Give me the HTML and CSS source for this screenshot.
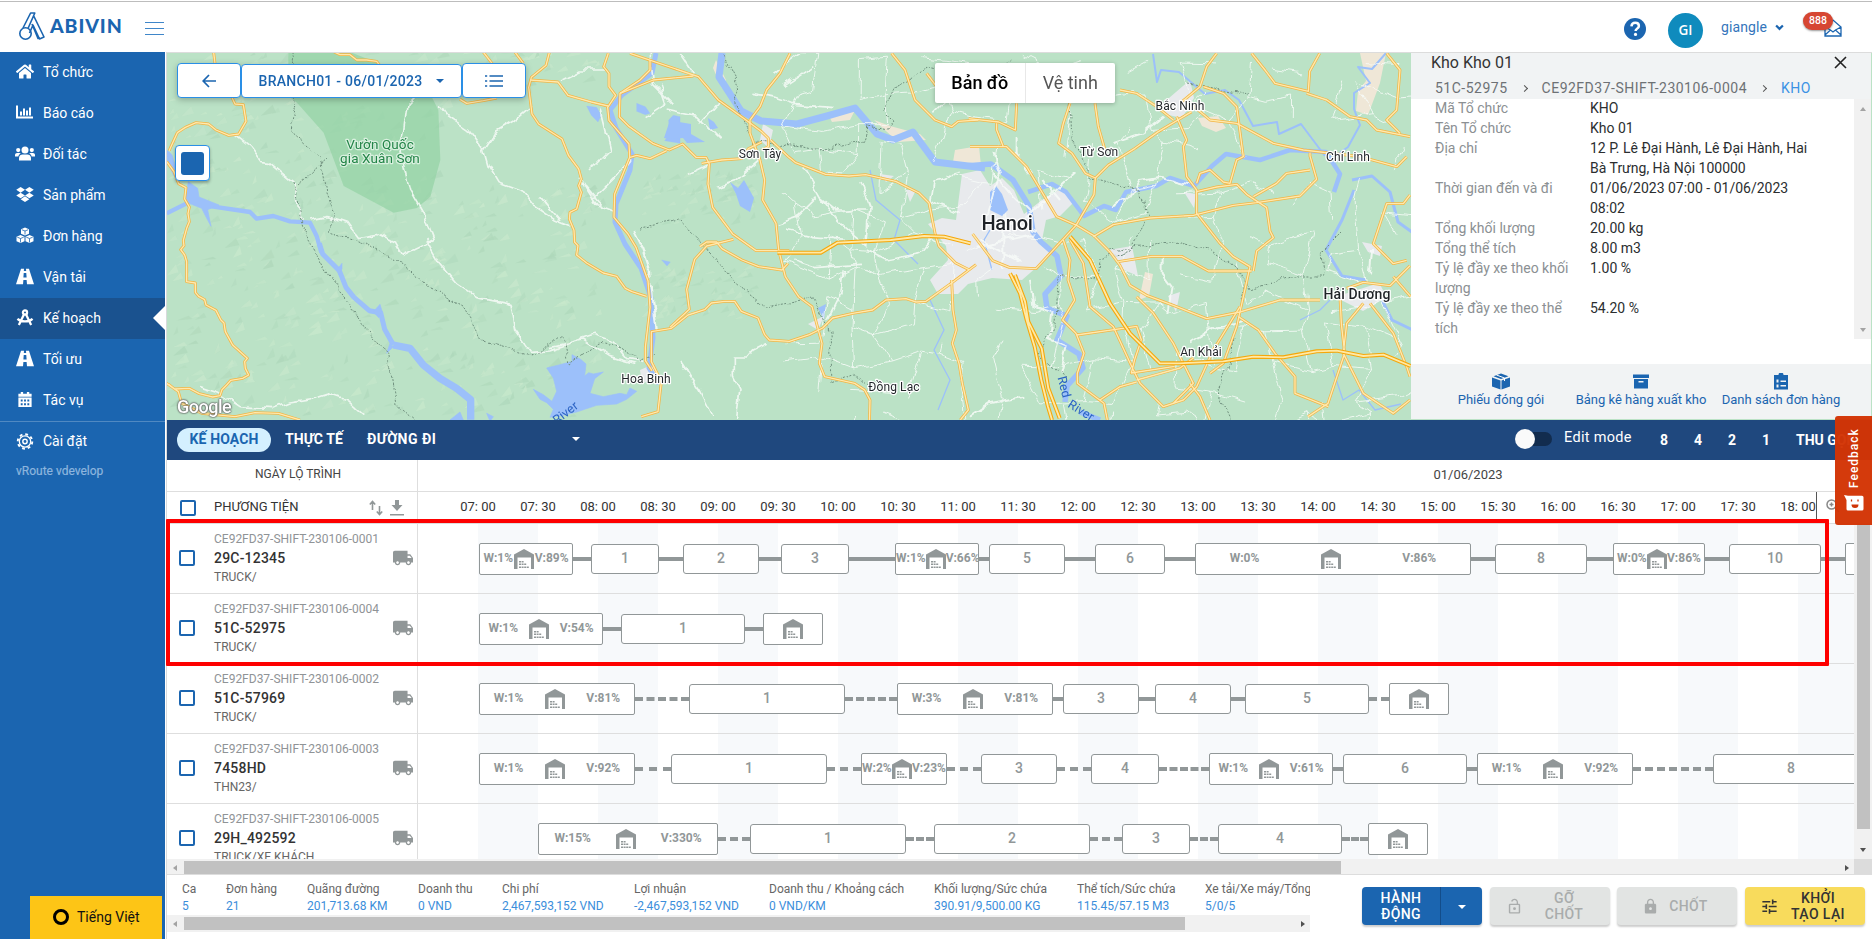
FILE: index.html
```html
<!DOCTYPE html>
<html lang="vi">
<head>
<meta charset="utf-8">
<title>Abivin vRoute</title>
<link rel="stylesheet" href="styles.css">
</head>
<body>
<svg class="sprite" width="0" height="0">
  <symbol id="i-truck" viewBox="1 4 22 16"><path d="M20 8h-3V4H3c-1.100 0-2 .9-2 2v11h2c0 1.660 1.340 3 3 3s3-1.340 3-3h6c0 1.660 1.340 3 3 3s3-1.340 3-3h2v-5l-3-4zM6 18.500c-.83 0-1.500-.67-1.500-1.500s.67-1.500 1.500-1.500 1.500.67 1.500 1.500-.67 1.500-1.500 1.500zm13.500-9l1.960 2.500H17V9.500h2.500zm-1.500 9c-.83 0-1.500-.67-1.500-1.500s.67-1.500 1.500-1.500 1.500.67 1.500 1.500-.67 1.500-1.500 1.500z"/></symbol>
  <symbol id="i-depot" viewBox="0 0 20 20"><path d="M0 20V5.500L10 0l10 5.500V20h-3V8.500H3.500V20z"/><path d="M5 12h2v1.500H5zM7.600 12h2v1.500h-2zM5 14.500h2V16H5zM7.600 14.500h2V16h-2zM10.200 14.500h2V16h-2zM5 17.500h2V19H5zM7.600 17.500h2V19h-2zM10.200 17.500h2V19h-2zM12.800 17.500h2V19h-2z"/></symbol>
  <symbol id="i-road" viewBox="0 0 20 17"><path d="M5.600 0h3.300l-.2 2.500h2.600L11.100 0h3.300L20 17h-7.800l-.4-4.500H8.200L7.800 17H0zM8.600 4.500l-.4 5h3.600l-.4-5z" fill-rule="evenodd"/></symbol>
</svg>

<header class="topbar">
  <svg class="logo-mark" viewBox="0 0 26 30" fill="none" stroke="#1b65b0" stroke-width="1.600" stroke-linejoin="round"><circle cx="6.500" cy="22.500" r="5.700"/><path d="M4 17L11.600 2h4.200L9 17.500M14.500 4.500L25 26l-4.500 2-6.500-14-3.500 8M13 13l6 14.500 2-.5"/></svg>
  <span class="logo-text">ABIVIN</span>
  <span class="burger"><i></i><i></i><i></i></span>
  <div class="account">
    <svg class="help" viewBox="0 0 22 22"><circle cx="11" cy="11" r="11" fill="#1b65b0"/><path d="M7.400 8.300c.3-2.300 1.800-3.500 3.800-3.500 2.100 0 3.700 1.200 3.700 3.100 0 2.700-3.300 2.700-3.300 5" fill="none" stroke="#fff" stroke-width="2.500"/><circle cx="11.500" cy="16.400" r="1.600" fill="#fff"/></svg>
    <span class="avatar">GI</span>
    <span class="user">giangle</span>
    <svg class="chev" viewBox="0 0 8 6"><path d="M1 1.200l3 3 3-3" fill="none" stroke="#1b65b0" stroke-width="2"/></svg>
    <span class="mail"><svg viewBox="0 0 18 18" fill="none" stroke="#1b65b0" stroke-width="1.300"><path d="M1 8v9h16V8L9 1zM1 16l5.500-5 2.500 2 2.500-2 5.500 5M1 8l5.500 3M17 8l-5.500 3"/></svg><b>888</b></span>
  </div>
</header>

<div class="body">
  <nav class="side">
    <a><svg viewBox="0 0 576 512"><path d="M280.370 148.260L96 300.110V464a16 16 0 0 0 16 16l112.060-.29a16 16 0 0 0 15.920-16V368a16 16 0 0 1 16-16h64a16 16 0 0 1 16 16v95.640a16 16 0 0 0 16 16.050L464 480a16 16 0 0 0 16-16V300L295.670 148.260a12.190 12.190 0 0 0-15.300 0zM571.600 251.470L488 182.560V44.050a12 12 0 0 0-12-12h-56a12 12 0 0 0-12 12v72.610L318.470 43a48 48 0 0 0-61 0L4.340 251.470a12 12 0 0 0-1.600 16.900l25.500 31A12 12 0 0 0 45.150 301l235.220-193.740a12.190 12.190 0 0 1 15.300 0L530.900 301a12 12 0 0 0 16.900-1.600l25.500-31a12 12 0 0 0-1.700-16.930z"/></svg>Tổ chức</a>
    <a><svg viewBox="0 0 18 16"><path d="M0 1h2v11h15v2H0zM4 7h2v4H4zM7 4h2v7H7zM10 6h2v5h-2zM13 3h2v8h-2z"/></svg>Báo cáo</a>
    <a><svg class="wide" viewBox="0 0 20 16"><circle cx="10" cy="4.500" r="3.500"/><circle cx="3.200" cy="4.600" r="2.100"/><circle cx="16.800" cy="4.600" r="2.100"/><path d="M4 15v-2.500C4 10 6 9 7.500 9h5c1.500 0 3.500 1 3.500 3.500V15zM0 11V9.500C0 8.300 1 7.500 2 7.500h2.500c.6 0 1.100.2 1.400.5C4.200 8.700 3.500 10 3.300 11zM20 11V9.500c0-1.200-1-2-2-2h-2.500c-.6 0-1.100.2-1.400.5 1.700.7 2.400 2 2.600 3z"/></svg>Đối tác</a>
    <a><svg viewBox="0 0 528 512"><path d="M264.400 116.300l-132 84.300 132 84.300-132 84.300L0 284.100l132.300-84.300L0 116.300 132.300 32l132.100 84.300zM131.600 395.700l132-84.300 132 84.300-132 84.300-132-84.300zm132.800-111.600l132-84.300-132-83.600L395.700 32 528 116.300l-132.300 84.300L528 284.800l-132.300 84.300-131.300-85z"/></svg>Sản phẩm</a>
    <a><svg viewBox="0 0 18 16"><path d="M9 0l4 1.700v4.500L9 8 5 6.200V1.700zM4.500 7.500l4 1.700v4.500l-4 1.800-4-1.800V9.200zM13.500 7.500l4 1.700v4.500l-4 1.800-4-1.800V9.200z"/><path d="M5.800 2.200L9 3.500l3.200-1.300M1.300 9.700L4.500 11l3.200-1.300M10.300 9.700l3.200 1.300 3.200-1.300M9 3.500V7M4.500 11v4M13.500 11v4" fill="none" stroke="#1b65b0" stroke-width=".8"/></svg>Đơn hàng</a>
    <a><svg><use href="#i-road"/></svg>Vận tải</a>
    <a class="on"><svg viewBox="0 0 18 18" fill="none" stroke="#fff" stroke-width="2.400"><circle cx="9" cy="3.600" r="2.200"/><path d="M8 5.500L2.500 17M10 5.500L15.500 17M1 10.500c4 3.600 12 3.600 16 0"/></svg>Kế hoạch</a>
    <a><svg><use href="#i-road"/></svg>Tối ưu</a>
    <a><svg viewBox="0 0 18 18"><path fill-rule="evenodd" d="M2 3h2.500V1H7v2h4V1h2.500v2H16v3H2zM2 7h14v10H2zM4.500 9v2h2V9zM8 9v2h2V9zM11.500 9v2h2V9zM4.500 13v2h2v-2zM8 13v2h2v-2zM11.500 13v2h2v-2z"/></svg>Tác vụ</a>
    <a class="sep"><svg viewBox="0 0 18 18" fill="none" stroke="#fff"><circle cx="9" cy="9" r="7.700" stroke-width="2" stroke-dasharray="3 3.050"/><circle cx="9" cy="9" r="6" stroke-width="1.400"/><circle cx="9" cy="9" r="2.300" stroke-width="1.500"/></svg>Cài đặt</a>
    <span class="ver">vRoute vdevelop</span>
    <div class="lang"><i></i>Tiếng Việt</div>
  </nav>

  <main class="main">
    <section class="map">
      <svg class="canvas" viewBox="167 53 1244 367" preserveAspectRatio="none">
        <defs>
          <filter id="wiggle" filterUnits="userSpaceOnUse" x="160" y="45" width="1260" height="385"><feTurbulence type="fractalNoise" baseFrequency=".07" numOctaves="2" seed="4"/><feDisplacementMap in="SourceGraphic" scale="9" xChannelSelector="R" yChannelSelector="G"/></filter>
          <g id="major">
            <g transform="translate(160 50) scale(.33333)">
              <path d="M160 0L165 40M215 140l10 22 25 2 8 50-22 38-30 4-38-16-22-18-38-4-32 14-24 16-22 48-2 6M20 335l22 30 14 36 22 12-4 34 14 24-4 20 4 24-8 20-10 36 2 16-10 12 12 16 6 20v60l26 4v28l10 12 18 10 4 16 30 16 14 28 10 10 4 26 22 40 44 40-8 10 2 20 10 20-18 10-36 6-12 14-14 14-6 18-22 4-40-10-30-16-44 2-18-14-30-8M20 1000l35 25 10 35 60 30 100 10 60-12 70 2 65 20M510 0l30 14h30l20 16h30l30 4 20 26M965 0l35 45M1060 0l30 40M900 148l20 12 50-8 40-8"/>
              <path d="M1170 0l-12 46-44 36-8 30 10 80 20 30 70 45 20 50 30 40 8 30-8 20 8 20-14 50-20 10-2 20 14 34 2 36 10 10-4 28 30 24 50 30 40 10 26 36 20 10 44 14"/>
              <path d="M1110 90l84 6 30 40 70 20 50 12"/>
            </g>
            <g transform="translate(540 40) scale(.33333)">
              <path d="M270 40l190 65 15 5 60 70 90 65 40 30 20 20v25l-20 10M692 300l53 50 22 18 90 35 70 5 50-4 90 20 70 35 30 30 20 100 10 30 50 50 40 20"/>
              <path d="M205 40l-14 40 16 20v40l20 26-24 36 4 40 60 70 2 40-45 110-2 70 42 50 24 40 36 100 6 80-7 60-7 60 0 40 20 30"/>
              <path d="M330 60v30l-30 30-60 40-2 70 30 30 70 50 50 20 40-18 40 40h30l10 20-4 60 14 70 60 80 70 50h100"/>
              <path d="M240 160l100-40 120-12M270 352l20-6 40 10 50-24M485 370l60-10 60-4 20-30 40-20"/>
              <path d="M750 40l-30 60-40 50-20 50-30 40v40l30 80 14 60-6 60 40 70 8 80 20 80 40 60 40 30 30 110-8 60 16 40 90 20 30 20 16 30-2 80-14 20"/>
              <path d="M304 1130l50-15 10-90-30-60v-90l60-10 50-40 50-16 20-20 40-5h30l20 30 50 20 20 50 14 16 60 4 60-20 40-20 30-30 60-14 60-10 40-30 60-4 30 10 30-2 70-50 80-60"/>
              <path d="M390 862l58-54-8-60 24-90 36-40 80-20M480 620l20-14h30l16 20 60 34 50 20 70 10 18-20"/>
              <path d="M1160 100l60 80h60M1055 40l40 50 30 90 60 60 50 20 20-16 60-4"/>
              <path d="M1235 720l4 90 10 60-12 40 20 60 10 60 18 80-24 30"/>
            </g>
            <g transform="translate(970 40) scale(.33333)">
              <path d="M0 320h110l60 60 60 100 30 50 60 26 50 30 50 50 30 40 30 60 50 30 80 30 100 40 100-20 120-36h120"/>
              <path d="M300 190l-20 60-14 60 40 30 40 60 30 14-4 50-54 92-120 130-80-4-50-20-60-80M375 415l40-40 80-50 70-50 100-60M450 150l50 10 60 40 50 40M620 230l30 70-10 20 10 90 30 40v70l70 90 40 40 50 30-20 90-20 90-40 110-40 30M740 40l-30 40-20 60-60 50"/>
              <path d="M370 590l60-36 110-20 130-8 120-30 70-8 130-20 50-50-20-70 0-10"/>
              <path d="M660 190l60 50 80 10 110 60 90 20 170 20 110 30 30-30M700 140l60 20 40 40 20 150-20 10-20 70-20-4-40-36-30 10-10 30M680 455l60-14 60-8 30 30 60 40 10 70 10 20-50 40-10 60M850 470l70-40 30-30 70-10"/>
              <path d="M845 40l40 50 30 40 100 24 4-60 30-54M1010 160l60 20 70 50 50 10 30 30 100 20M1250 40l40 50-10 120-30 30 40 40"/>
              <path d="M445 665l100-16h90l80 44h130M80 250v20l20 50M140 190l-4 80-50-24-90-10M375 190l10 70 20 70"/>
              <path d="M280 600l20 60-6 60 20 60-36 60 40 40 24 60-20 60v30l80 60 10 50M300 600l40 70 20 130 70 60 60 130 20 40 70 70 60-20 40-40 50-110 80-130M320 885l180-26 14 40-20 60-10 40 130-20M500 770l50 50 60 90 60 120-60 60M500 1020l130-36 40-30M390 1080l60-40 50-14M660 1030l30 40 30 70"/>
              <path d="M805 830l60 40 50 70 60 70v50l100 40M1110 770l4 80 10 90-50 150-60 40M1180 790l-50 60-10 90 60 120 90 60 50-40M1200 790l70 90 40 100 10 30M1320 465l-20 26h-50l-40 120 60 60 40-10M1130 745l50-18 80 10 60-60M1270 710l52 60"/>
            </g>
          </g>
          <g id="trunk">
            <g transform="translate(540 40) scale(.33333)"><path d="M712 638h130l50-30 160-8 100-12 60 2 80 20"/></g>
            <g transform="translate(970 40) scale(.33333)">
              <path d="M300 590l60 70 60 130 60 90 60 60 30 30h60l130-6 90-14 90 2 100-18 60-2 80 16 60-4 82 34M135 705l30 80 10 60 40 80 20 120 34 90M120 700l30 60 20 80 24 80 20 100 20 80 12 40"/>
            </g>
          </g>
        </defs>
        <rect x="167" y="53" width="1244" height="367" fill="#bbe2c6"/>
        <g id="relief"></g>
        <g transform="translate(160 50) scale(.33333)">
          <path d="M385 0h170l100 40 60 40 100 60 20 40 6 150-30 110-40 34-70 14-150-80-60-160-80-90-26-20z" fill="#94d3a5" opacity=".72"/>
        </g>
        <g transform="translate(160 50) scale(.33333)" fill="#9cc0fa" stroke="#9cc0fa" stroke-linejoin="round">
          <path fill="none" stroke-width="13" d="M20 490l60-30 10-30M130 460l30 10 110 16 20 20 50-8 50 16 60 4 20 40 14 50"/>
          <path fill="none" stroke-width="15" d="M478 580l10 32 50 50 20 50 24 30 46 40 34 6 12 50 26 46"/>
          <path fill="none" stroke-width="22" d="M700 885l50 10 40 50 50 40 50 30 42 34v60"/>
          <path stroke-width="2" d="M85 395l28 20 4 26 60 24-34 14 10 50-16-30-12-24-50-20zM530 660l16-20v16l-8 20zM640 785l20-22 6 20-10 20zM690 880l-10 30 20-20zM20 300l16 14 16 60-10 4-20-40zM870 1110l30-24 10 24zM980 1090l20 10-10 14z"/>
          <path stroke-width="2" d="M1200 944l36-10 0-20 26 14 16 14-4 36 12-10 14 4 30-6-26 20-14 44 40 10 50-10 20 4 10-20 20 10-30 24-30 14-60 4-60 20-40 10-40 6 10-24-20-20-20-10-20-30 30 16 26 20 14-30-10-40-20-30z"/>
          <path d="M1526 210l14-14 20 4v80l-46-8 14-20zM1430 160l26 10 14 20-14 4-26-10zM1280 168l30 4 14 24-10 20-20-20zM1505 630l26 6-10 12z"/>
        </g>
        <g fill="#efe7d7">
          <path d="M716 60l10 20-4 8-9-20zM830 118l26-10-6 12-18 2zM874 120l24 22 28-2-6-6-30-8zM955 150l24-4 2 20-28-4zM1198 118l20-2 8 12-10 4-14-6zM1145 272l8 2-4 22-10 4zM1360 53h26l-6 30-6 16-6 16-12-4 2-20 8-10z"/>
        </g>
        <path d="M962 174l18-4 10 16 12-8 12 12 10 24 18-14 20-12 12 14-14 14-14 4-4 20 10 12-14 14-16 14-30-2-24 6-10 10h-20l-8-14 18-20-2-14-18-22 14-6 14 2z" fill="#e8eaed"/>
        <path d="M1162 104l28-24 4 18-12 20-18-4zM763 124l10 6-4 18-9-8zM808 324l16-8-6 14zM1335 297l44-14 8 14-24 14zM1108 250l24-4 6 30-14-6zM1168 296l12-4-4 20zM640 370l14-6 4 12-16 8zM1184 192l12 2-2 14zM1362 242l20 4-2 10-12-4zM880 174l14 2-8 6zM906 190h10l-6 12z" fill="#e8eaed"/>
        <g class="water" fill="none" stroke="#9cc0fa" stroke-linejoin="round">
          <path d="M656 53l-4 20-30 22-12 15 6 18 16 26-2 16-14 34-1 18 10 22 16 24 10 30 2 40-4 30 10 16" stroke-width="5"/>
          <path d="M722 53l-3 24 22 34 20 10 36 3 30-8 28-8 22 26 16 6 20-8 22 30 50 6" stroke-width="7"/>
          <path d="M965 166l26-2 22 16 16 26 4 26 8 10 16 14 4 20-16 18 2 14 20 8-10 24 22 14 4 14-16 18-2 16M1080 412l20 8" stroke-width="5.500"/>
          <path d="M1028 192l24-8 14 8 18 24 20-10 12 4 10-18 30-6 14-8 24 8 18-20 14-12 34 6 30-10 36 2 14 22-6 18" stroke-width="4.500"/>
          <path d="M1153 54l4 28 4-12 18 2 26 22 20-4 14 10 14 26 24-4 2 12 22-10 24 32" stroke-width="2"/>
          <path d="M1354 190l-12 30-16 30 16 26 24 4M1352 180l20-4 18 16 8 30 14 10M1382 300l10 20 21 10" stroke-width="3"/>
          <path d="M1386 53l-14 16-14-2 12 16-16 10v16l6 16-12 22-14 10" stroke-width="2"/>
          <path d="M990 230l-6 10 8 30M930 300l14 30-10 20 16 30-12 30M870 170l6 30 24 20-6 20 24 24M1333 370l10 30 16-10 16 20 26-6M1300 320l20-10 20-20" stroke-width="1.300"/>
        </g>
        <path d="M664 138l6-18 5-4 4 6 12 2v10l14 8-18 1-4-5-12 1zM730 182l8 6 6-8 10 18-4 14-10-6-4-12zM990 192l6-6 6 8 6 16-6 6-12-6zM637 104l10 6-4 4zM708 118l6 4 4 6-8 2zM818 308l8-4-2 16z" fill="#9cc0fa"/>
        <g class="minor" fill="none" stroke="#f7fbf8" stroke-linejoin="round" filter="url(#wiggle)">
          <g id="lanes" stroke-width="1"></g>
          <g transform="translate(160 50) scale(.33333)" stroke-width="5">
            <path d="M230 260l40 30 36 48 22 2 74 62 6 60 22 50M450 510l50-10 60 20 30 40 60-10 60 30 20 36 70-34 20-10-30-80-40-70-30-120 14-60 10-80 40-40 30-8 20-20M840 160l26 38 60 40 44 60 14 50 30 50 80 30 30 40 60 40 50 20M800 570l40 70 50 60 60 40 100 20 14 80 46 64 60-4 70-24 60-20 60 20 40 50 50 8M970 300l40-60 50-30 54-44M120 1010l60 20 60 40 100 6 50-20 60-10 50-16 60 20 50 44M1260 380l50 80 50 20M1290 360l60-60-30-120M1410 330l-40 50-70 70M1540 160l-60-60-10-100"/>
          </g>
          <g transform="translate(540 40) scale(.33333)" stroke-width="5">
            <path d="M540 180l-60 70M420 40l40 60M530 440l60-20 70-60M790 380l50 90 50 40h90M840 470l60 80 80 70 10-120-30-80M1260 400l-80 20-10 60 90 40M680 910l-40 20-20 24h-40v60l20 40-10 80M710 550l60-20 60-60M980 630l60 30 100-20 40-50"/>
            <path d="M640 160l60 10 60 20 120 10M700 100l80-60M820 80l-90 60M380 210l90 20 70 70M450 400l60-30M360 130l20 60-60 40M740 570l80 20 120 10M760 660l60 20 140-10M910 690l-10 70-40 80M30 920l100-20 80 50 70 20M60 120l60-30h80M140 440l50 60M420 960l60 90 40 80M60 540l-60-70M1180 220l60-60"/>
            <path d="M280 570l30 60 20 60 10 100 10 80" stroke-width="7"/>
          </g>
          <g transform="translate(970 40) scale(.33333)" stroke-width="6">
            <path d="M140 290v50l40 60M310 400l-140 130M520 280l60-50M430 310l90-30M50 530l40-130-20-60M70 400l50 60 60 60M180 720l10 80 60 20-10 80 50 20-20 80M575 650v50l30 40-10 80M660 910l80-50 80-20M0 1130l60-40 100-20M420 500l60-30 30-50 60-10 100 26M1200 700l6-70M100 540l100 30M20 620l180-40M30 600l120 60M100 520v170M220 420l50 60"/>
          </g>
        </g>
        <path class="border" filter="url(#wiggle)" d="M1012 60l-30 20 4 16-22 0-14-26-22-4-14 12-20 10-10 24 10 10-6 8-20-4-4 14-44 10-16-4-50-4-16-30-4-36-10-20M293 53l2 50-4 28 30 26 6 36 8 20-6 20 30 8 40 20 24 22 40 24 20 34 50 14 30-20 6 28 30-20 20 4 20 14 16-8M298 185l30-26M293 184l12 48 22 40 42 60 20 24 8 50 18 14-14 30M640 228l40-8 24 26 30 36 30 24 50-8 16 34 2 50 20-8 30 20M1070 100l2 40 20 38 46 12 10 26-12 24-6 10-30 10-2 20-40-4-2 50-20 30 30 20M1110 250l60-8 40 8 30 20 10 20 40-14 34 0-2-24 20-20M1244 284l-14 76-12 30 20 44M1189 84l60 10"/>
        <use href="#major" class="casing"/><use href="#major" class="core"/>
        <use href="#trunk" class="casing wide"/><use href="#trunk" class="core wide"/>
        <g class="labels" text-anchor="middle">
          <text x="380" y="149" class="park">Vườn Quốc</text><text x="380" y="163" class="park">gia Xuân Sơn</text>
          <text x="760" y="158">Sơn Tây</text><text x="646" y="383">Hoa Binh</text><text x="894" y="391">Đồng Lạc</text>
          <text x="1180" y="110">Bắc Ninh</text><text x="1099" y="156">Từ Sơn</text><text x="1348" y="161">Chí Linh</text>
          <text x="1201" y="356">An Khải</text><text x="1357" y="299" class="town">Hải Dương</text><text x="1007" y="230" class="city">Hanoi</text>
          <text class="river" transform="translate(568 416) rotate(-38)">River</text>
          <text class="river" transform="translate(1060 388) rotate(76)">Red</text>
          <text class="river" transform="translate(1079 414) rotate(32)">River</text>
        </g>
      </svg>
      <div class="route-bar">
        <button><svg width="15" height="14" viewBox="0 0 15 14"><path d="M14 7H1.500M7 1L1.200 7 7 13" fill="none" stroke="#1b65b0" stroke-width="1.700"/></svg></button>
        <button class="pick">BRANCH01 - 06/01/2023<i class="caret"></i></button>
        <button><svg width="18" height="14" viewBox="0 0 18 14"><path d="M4.500 2H18M4.500 7H18M4.500 12H18M0 2h2.200M0 7h2.200M0 12h2.200" stroke="#1b65b0" stroke-width="1.700"/></svg></button>
      </div>
      <span class="swatch"><i></i></span>
      <div class="maptype"><b>Bản đồ</b><span>Vệ tinh</span></div>
      <span class="google">Google</span>

      <aside class="panel">
        <div class="panel-head">
          <h2>Kho Kho 01</h2>
          <svg class="close" viewBox="0 0 13 13"><path d="M1 1l11 11M12 1L1 12" stroke="#222" stroke-width="1.600"/></svg>
          <div class="crumbs"><span>51C-52975</span><i></i><span>CE92FD37-SHIFT-230106-0004</span><i></i><em>KHO</em></div>
        </div>
        <div class="panel-body">
          <dl>
            <dt>Mã Tổ chức</dt><dd>KHO</dd>
            <dt>Tên Tổ chức</dt><dd>Kho 01</dd>
            <dt>Địa chỉ</dt><dd>12 P. Lê Đại Hành, Lê Đại Hành, Hai<br>Bà Trưng, Hà Nội 100000</dd>
            <dt>Thời gian đến và đi</dt><dd>01/06/2023 07:00 - 01/06/2023<br>08:02</dd>
            <dt>Tổng khối lượng</dt><dd>20.00 kg</dd>
            <dt>Tổng thể tích</dt><dd>8.00 m3</dd>
            <dt>Tỷ lệ đầy xe theo khối<br>lượng</dt><dd>1.00 %</dd>
            <dt>Tỷ lệ đầy xe theo thể<br>tích</dt><dd>54.20 %</dd>
          </dl>
          <div class="pscroll"><i class="up"></i><i class="down"></i></div>
        </div>
        <div class="panel-foot">
          <a><svg viewBox="0 0 18 16"><path d="M9 0L1.500 2.700 9 5.500l7.500-2.800zM0 4l8.500 3v9L0 13zM18 4L9.500 7v9l8.500-3z"/><path d="M4.500 1.500L12.500 4.500v3" fill="none" stroke="#fff" stroke-width="1"/></svg>Phiếu đóng gói</a>
          <a><svg viewBox="0 0 18 16"><path fill-rule="evenodd" d="M1 1h16v3.500H1zM2 5.500h14V15H2zM6.500 7.500V9h5V7.500z"/></svg>Bảng kê hàng xuất kho</a>
          <a><svg viewBox="0 0 16 17"><path fill-rule="evenodd" d="M1 2h4.500a2.500 2.500 0 0 1 5 0H15v14.500H1zM3.500 6.500v3h2v-3zM7.500 7.500V9H13V7.500zM3.500 11.500v3h2v-3zM7.500 12v1.500H13V12z"/></svg>Danh sách đơn hàng</a>
        </div>
      </aside>
    </section>

    <div class="tabs">
      <span class="tab on">KẾ HOẠCH</span><span class="tab">THỰC TẾ</span><span class="tab third">ĐƯỜNG ĐI</span><i class="caret white"></i>
      <span class="toggle"></span><span class="edit">Edit mode</span>
      <div class="zoom"><span>8</span><span>4</span><span>2</span><span>1</span></div><span class="fold">THU GỌN</span>
    </div>

    <section class="gantt">
      <div class="g-date"><span>NGÀY LỘ TRÌNH</span><span>01/06/2023</span></div>
      <div class="g-hours">
        <div class="g-vehicle"><i class="box"></i><span>PHƯƠNG TIỆN</span>
          <svg width="14" height="16" viewBox="0 0 14 16"><path d="M3.500 10V2.500M.8 4.500l2.700-3 2.700 3M10.500 6v7.500M7.800 11.500l2.700 3 2.700-3" fill="none" stroke="#919798" stroke-width="1.600"/></svg>
          <svg width="14" height="16" viewBox="0 0 14 16"><path d="M5 0h4v5h3.500L7 11 1.500 5H5zM0 14h14v1.500H0z" fill="#919798"/></svg></div>
        <div class="ticks" id="ticks"></div>
        <svg class="mag" viewBox="0 0 14 14" fill="none" stroke="#888" stroke-width="1.500"><circle cx="5.500" cy="5.500" r="4.500"/><path d="M9 9l4 4M3.500 5.500h4M5.500 3.500v4"/></svg>
      </div>
      <div class="g-body">
        <div class="rows" id="rows"></div>
        <div class="vscroll"><i></i><b class="down dark"></b></div>
      </div>
      <div class="hscroll"><b class="left"></b><i></i><b class="right"></b><span></span></div>
    </section>

    <footer class="foot">
      <div class="stats-wrap">
        <div class="stats">
          <div>Ca<b>5</b></div><div>Đơn hàng<b>21</b></div><div>Quãng đường<b>201,713.68 KM</b></div><div>Doanh thu<b>0 VND</b></div><div>Chi phí<b>2,467,593,152 VND</b></div><div>Lợi nhuận<b>-2,467,593,152 VND</b></div><div>Doanh thu / Khoảng cách<b>0 VND/KM</b></div><div>Khối lượng/Sức chứa<b>390.91/9,500.00 KG</b></div><div>Thể tích/Sức chứa<b>115.45/57.15 M3</b></div><div>Xe tải/Xe máy/Tổng<b>5/0/5</b></div>
        </div>
        <div class="hscroll small"><b class="left"></b><i></i><b class="right"></b></div>
      </div>
      <div class="actions">
        <button class="act blue"><span>HÀNH<br>ĐỘNG</span><em><i class="caret white"></i></em></button>
        <button class="act off"><svg viewBox="0 0 24 24"><path fill-rule="evenodd" d="M18 8h-1V6c0-2.760-2.240-5-5-5-2.300 0-4.200 1.500-4.800 3.600l1.900.6C9.500 3.900 10.600 2.900 12 2.900c1.710 0 3.100 1.390 3.100 3.100v2H6c-1.100 0-2 .9-2 2v10c0 1.100.9 2 2 2h12c1.100 0 2-.9 2-2V10c0-1.100-.9-2-2-2zm0 12H6V10h12v10z"/><circle cx="12" cy="15" r="2"/></svg><span>GỠ<br>CHỐT</span></button>
        <button class="act off"><svg viewBox="0 0 24 24"><path d="M18 8h-1V6c0-2.760-2.240-5-5-5S7 3.240 7 6v2H6c-1.100 0-2 .9-2 2v10c0 1.100.9 2 2 2h12c1.100 0 2-.9 2-2V10c0-1.100-.9-2-2-2zm-6 9c-1.100 0-2-.9-2-2s.9-2 2-2 2 .9 2 2-.9 2-2 2zm3.100-9H8.900V6c0-1.710 1.390-3.100 3.100-3.100 1.710 0 3.100 1.390 3.100 3.100v2z"/></svg><span>CHỐT</span></button>
        <button class="act yellow"><svg viewBox="0 0 24 24"><path d="M3 17v2h6v-2H3zM3 5v2h10V5H3zm10 16v-2h8v-2h-8v-2h-2v6h2zM7 9v2H3v2h4v2h2V9H7zm14 4v-2H11v2h10zm-6-4h2V7h4V5h-4V3h-2v6z"/></svg><span>KHỞI<br>TẠO LẠI</span></button>
      </div>
    </footer>
  </main>
</div>
<div class="highlight"></div>
<div class="feedback"><span>Feedback</span><svg viewBox="0 0 20 16"><path d="M0 0l4 .8h14a1.500 1.500 0 0 1 1.500 1.500V14a1.500 1.500 0 0 1-1.500 1.500H4A1.500 1.500 0 0 1 2.500 14V5z" fill="#fff"/><path d="M7.500 4.500v2M14 4.500v2" stroke="#d03406" stroke-width="1.300"/><path d="M7.500 9.500h7a3.500 3.500 0 0 1-7 0z" fill="#d03406"/></svg></div>
<script src="app.js"></script>
</body>
</html>
```
FILE: app.js
```js
const ORIGIN = 418;
// Stops are [start, end, label]; a depot label is "weight|volume" or "" when it carries no load.
const trips = [
  { code: 'CE92FD37-SHIFT-230106-0001', plate: '29C-12345', type: 'TRUCK/', dash: false, stops: [[479,573,'1|89'],[591,659,1],[683,759,2],[781,849,3],[895,979,'1|66'],[989,1065,5],[1095,1165,6],[1195,1471,'0|86'],[1495,1587,8],[1613,1705,'0|86'],[1729,1821,10],[1845,1905,'']] },
  { code: 'CE92FD37-SHIFT-230106-0004', plate: '51C-52975', type: 'TRUCK/', dash: false, stops: [[479,603,'1|54'],[621,745,1],[763,823,'']] },
  { code: 'CE92FD37-SHIFT-230106-0002', plate: '51C-57969', type: 'TRUCK/', dash: true, stops: [[479,635,'1|81'],[689,845,1],[897,1053,'3|81'],[1063,1139,3],[1155,1231,4],[1245,1369,5],[1389,1449,'']] },
  { code: 'CE92FD37-SHIFT-230106-0003', plate: '7458HD', type: 'THN23/', dash: true, stops: [[479,635,'1|92'],[671,827,1],[861,947,'2|23'],[981,1057,3],[1091,1159,4],[1209,1333,'1|61'],[1343,1467,6],[1477,1633,'1|92'],[1713,1869,8]] },
  { code: 'CE92FD37-SHIFT-230106-0005', plate: '29H_492592', type: 'TRUCK/XE KHÁCH', dash: true, stops: [[538,718,'15|330'],[750,906,1],[934,1090,2],[1122,1190,3],[1218,1342,4],[1368,1428,'']] }
];
const depot = '<svg><use href="#i-depot"/></svg>';

function lane(trip) {
  let x = ORIGIN;
  return trip.stops.map(([from, to, label], i) => {
    const gap = from - x;
    x = to;
    const solid = !trip.dash || gap < 17;
    const link = `<i class="link${i ? (solid ? ' solid' : ' dashed') : ''}" style="width:${gap}px"></i>`;
    const isDepot = typeof label === 'string';
    const [w, v] = isDepot ? label.split('|') : [];
    const inner = !isDepot ? label : v ? `<span>W:${w}%</span>${depot}<span>V:${v}%</span>` : depot;
    const kind = isDepot ? (to - from > 88 ? ' depot roomy' : ' depot') : '';
    return `${link}<div class="stop${kind}" style="width:${to - from}px">${inner}</div>`;
  }).join('');
}

document.getElementById('rows').innerHTML = trips.map(t =>
  `<div class="row"><div class="veh"><i class="box"></i><p><small>${t.code}</small><strong>${t.plate}</strong><span>${t.type}</span></p><svg class="truck"><use href="#i-truck"/></svg></div><div class="lane">${lane(t)}</div></div>`
).join('');

let ticks = '';
for (let m = 420; m <= 1080; m += 30) {
  ticks += `<span>${String(Math.floor(m / 60)).padStart(2, '0')}: ${m % 60 ? '30' : '00'}</span>`;
}
document.getElementById('ticks').innerHTML = ticks;

// Faceted hill shading in the mountainous western half.
let seed = 7;
const rnd = () => (seed = (seed * 16807) % 2147483647) / 2147483647;
let relief = '';
const facet = (x, y, a, b, o) => {
  relief += `<path d="M${x.toFixed(1)} ${y.toFixed(1)}l${a.toFixed(1)} ${(-b).toFixed(1)} ${(a * .3).toFixed(1)} ${(b * .7).toFixed(1)}z" fill="${rnd() > .45 ? '#c8e8cc' : '#afd8bb'}" opacity="${o.toFixed(2)}"/>`;
};
for (let i = 0; i < 620; i++) {
  const x = 167 + rnd() * 430, y = 53 + rnd() * 367;
  if (x > 440 && y > 90 && y < 190) continue;
  facet(x, y, 3 + rnd() * 9, 3 + rnd() * 9, .35 + rnd() * .45);
}
for (let i = 0; i < 110; i++) {
  facet(640 + rnd() * 110, (i % 2 ? 175 : 270) + rnd() * 50, 3 + rnd() * 7, 3 + rnd() * 6, .55);
}
document.getElementById('relief').innerHTML = relief;

// Web of local lanes across the delta.
const STEP = 30;
const node = (c, r) => {
  const h = Math.sin(c * 127.1 + r * 311.7) * 43758.5453, k = Math.sin(c * 269.5 + r * 183.3) * 24634.6345;
  return [(780 + c * STEP + (h - Math.floor(h)) * 24).toFixed(1), (50 + r * STEP + (k - Math.floor(k)) * 24).toFixed(1)];
};
let lanes = '';
for (let c = 0; c < 21; c++) {
  for (let r = 0; r < 13; r++) {
    const from = node(c, r);
    if (rnd() < .5) lanes += `M${from}L${node(c + 1, r)}`;
    if (rnd() < .5) lanes += `M${from}L${node(c, r + 1)}`;
  }
}
document.getElementById('lanes').innerHTML = `<path d="${lanes}"/>`;
```
FILE: styles.css
```css
* { box-sizing: border-box; }
body { margin: 0; width: 1872px; height: 939px; overflow: hidden; font: 14px/20px Roboto, "Liberation Sans", sans-serif; color: #333; background: #fff; position: relative; display: flex; flex-direction: column; }
.sprite { position: absolute; }
button { font: inherit; border: 0; padding: 0; margin: 0; }
i, em { font-style: normal; }

.topbar { flex: none; height: 52px; border-top: 1px solid #fff; box-shadow: inset 0 1px #bdbdbd; display: flex; align-items: flex-start; padding-left: 19px; background: #fff; }
.logo-mark { width: 26px; height: 30px; margin-top: 10px; }
.logo-text { margin: 15px 0 0 5px; font: 900 19.500px/20px Lato, sans-serif; color: #1b65b0; letter-spacing: .9px; width: 95px; }
.burger { display: flex; flex-direction: column; gap: 5px; margin-top: 21px; }
.burger i { width: 19px; height: 1px; background: #3f86c9; }
.account { margin-left: auto; display: flex; align-items: flex-start; width: 248px; }
.help { width: 22px; height: 22px; margin-top: 17px; }
.avatar { width: 35px; height: 35px; border-radius: 50%; margin: 12px 0 0 22px; background: #0f8bbd; color: #fff; font: 600 13.500px/35px "Open Sans", sans-serif; text-align: center; }
.user { margin: 16px 0 0 18px; width: 54px; color: #3475bb; letter-spacing: .1px; }
.chev { width: 9px; height: 7px; margin-top: 23px; }
.mail { position: relative; margin: 18px 0 0 40px; width: 18px; height: 18px; }
.mail svg { width: 18px; height: 18px; display: block; }
.mail b { position: absolute; left: -21px; top: -7px; width: 30px; height: 18px; border-radius: 9px; background: #d64632; color: #fff; font: 500 10.500px/17px Roboto; text-align: center; box-shadow: 0 1px 2px rgba(0,0,0,.4); }

.body { flex: 1; display: flex; min-height: 0; }
.side { width: 165px; background: #1b65b0; display: flex; flex-direction: column; flex: none; position: relative; }
.side a { height: 41px; display: flex; align-items: center; color: #fff; font-size: 14px; padding: 0 0 2px 16px; gap: 9px; }
.side a svg { width: 18px; height: 17px; fill: #fff; flex: none; }
.side a .wide { width: 20px; margin: 0 -1px; }
.side a svg[fill="none"] { fill: none; }
.side .on { background: #1a528f; position: relative; }
.side .on::after { content: ""; position: absolute; right: 0; top: 8px; border: 12px solid transparent; border-left: 0; border-right-color: #fff; }
.side .sep { border-top: 1px solid #5089c2; }
.ver { color: #8db5de; font-size: 12px; padding: 0 0 0 16px; margin-top: -2px; line-height: 22px; -webkit-text-stroke: .2px; }
.lang { margin: auto 3px 0 auto; width: 132px; height: 43px; background: #fdc516; color: #111; display: flex; align-items: center; padding: 0 0 1px 23px; gap: 8px; font-size: 14px; }
.lang i { width: 16px; height: 16px; border: 3px solid #000; border-radius: 50%; }

.main { flex: 1; min-width: 0; display: flex; flex-direction: column; border-left: 1px solid #d8dadc; margin-left: 1px; }
.map { height: 368px; position: relative; flex: none; overflow: hidden; border-top: 1px solid #dcdcdc; background: #bbe2c6; }
.canvas { width: 1244px; height: 367px; display: block; }
.casing { fill: none; stroke: #f2b544; stroke-width: 8.500px; stroke-linejoin: round; }
.core { fill: none; stroke: #ffe9ae; stroke-width: 4px; stroke-linejoin: round; }
.casing.wide { stroke: #f5a70b; stroke-width: 12px; }
.core.wide { stroke: #ffe9a5; stroke-width: 5.500px; }
.minor { opacity: .85; }
.border { fill: none; stroke: #6f8f7d; stroke-width: 1px; stroke-dasharray: 2 1.500; }
.labels text { font-size: 12px; fill: #1f2327; stroke: #fff; stroke-width: 2.500px; paint-order: stroke; stroke-linejoin: round; letter-spacing: .1px; }
.labels .park { fill: #228447; font-size: 13.500px; stroke: #d9f0df; }
.labels .town { font-size: 14px; font-weight: 500; }
.labels .city { font-size: 20px; font-weight: 500; letter-spacing: -.3px; }
.labels .river { fill: #2b63c4; stroke: none; font-size: 12.500px; }
.route-bar { position: absolute; left: 10px; top: 10px; display: flex; align-items: flex-end; filter: drop-shadow(0 2px 3px rgba(0,0,0,.25)); }
.route-bar button { height: 35px; width: 64px; background: #fff; border: 1px solid #2a8fe6; border-radius: 4px; display: flex; align-items: center; justify-content: center; }
.route-bar .pick { width: 221px; height: 34px; color: #1b65b0; font-weight: 500; font-size: 14px; letter-spacing: .27px; gap: 14px; }
.caret { width: 0; height: 0; border: 4px solid transparent; border-top-color: #1b65b0; border-bottom: 0; }
.caret.white { border-top-color: #fff; }
.swatch { position: absolute; left: 8px; top: 92px; width: 35px; height: 36px; background: #fff; border: 1px solid #2a8fe6; border-radius: 4px; box-shadow: 0 2px 3px rgba(0,0,0,.3); display: flex; align-items: center; justify-content: center; }
.swatch i { width: 23px; height: 23px; border-radius: 3px; background: #1b65b0; }
.maptype { position: absolute; left: 768px; top: 10px; width: 180px; height: 40px; background: #fff; display: flex; font-size: 18px; line-height: 40px; text-align: center; box-shadow: 0 1px 4px rgba(0,0,0,.25); border-radius: 2px; }
.maptype b { width: 91px; font-weight: 500; color: #000; border-right: 1px solid #e8e8e8; font-size: 18px; }
.maptype span { width: 90px; color: #565656; }
.google { position: absolute; left: 10px; top: 344px; font: 500 18px/20px Roboto; letter-spacing: -.5px; color: #fff; text-shadow: 0 0 1px #555, 0 0 2px #555, 0 0 2px #666; }

.panel { position: absolute; left: 1244px; top: -1px; width: 460px; height: 367px; background: #fff; display: flex; flex-direction: column; }
.panel-head { height: 47px; background: #f1f3f4; position: relative; padding: 0 20px; display: flex; flex-wrap: wrap; justify-content: space-between; align-content: flex-start; }
.panel-head h2 { margin: 0; font-size: 16px; font-weight: 400; line-height: 21px; color: #333; }
.close { width: 13px; height: 13px; margin: 4px 4px 0 0; }
.crumbs { width: 100%; margin-top: 5px; padding-left: 4px; display: flex; color: #6d7175; letter-spacing: .5px; font-size: 14px; white-space: nowrap; }
.crumbs i { width: 5px; height: 5px; border: solid #555; border-width: 1.500px 1.500px 0 0; transform: rotate(45deg); margin: 8px 15px 0 14px; }
.crumbs em { color: #3b92e4; }
.panel-body { height: 265px; display: flex; justify-content: space-between; }
dl { margin: -1px 0 0 24px; display: grid; grid-template-columns: 155px 260px; align-content: start; line-height: 20px; white-space: nowrap; }
dt { color: #8b9093; }
dd { margin: 0; color: #2b2e30; }
.pscroll { width: 17px; height: 240px; background: #f1f1f1; display: flex; flex-direction: column; justify-content: space-between; align-items: center; padding: 8px 0 7px; }
.up { border: 3.500px solid transparent; border-top: 0; border-bottom: 4px solid #a3a3a3; }
.down { border: 3.500px solid transparent; border-bottom: 0; border-top: 4px solid #a3a3a3; }
.down.dark { border-top-color: #505050; }
.panel-foot { flex: 1; background: #f1f3f4; display: grid; grid-template-columns: repeat(3, 140px); padding: 9px 0 0 20px; color: #1b65b0; font-size: 13px; white-space: nowrap; }
.panel-foot a { display: flex; flex-direction: column; align-items: center; line-height: 19px; }
.panel-foot svg { width: 18px; height: 17px; fill: #1b65b0; }

.tabs { height: 40px; flex: none; background: #1f487e; color: #fff; display: flex; align-items: center; font-weight: 700; padding: 0 0 3px 10px; position: relative; overflow: hidden; white-space: nowrap; }
.tab { width: 82px; font-size: 14px; letter-spacing: .1px; }
.tab.on { width: 94px; height: 24px; border-radius: 12px; background: #d4f0ff; color: #1b65b0; text-align: center; line-height: 22px; margin: 3px 14px 0 0; }
.tab.third { width: 96px; letter-spacing: .5px; }
.tabs .caret { margin-left: 109px; }
.toggle { margin-left: 940px; width: 32px; height: 14px; border-radius: 7px; background: #122c4e; position: relative; }
.toggle::before { content: ""; position: absolute; left: -5px; top: -3px; width: 20px; height: 20px; border-radius: 50%; background: #fafafa; }
.edit { font-weight: 400; margin-left: 12px; width: 96px; letter-spacing: .3px; font-size: 14.500px; margin-top: -1px; }
.zoom { display: grid; grid-template-columns: repeat(4, 34px); width: 136px; margin-top: 2px; font-size: 14px; }
.fold { margin-top: 2px; font-size: 14px; }

.gantt { flex: none; height: 415px; display: flex; flex-direction: column; border-bottom: 1px solid #ddd; }
.g-date { height: 32px; border-bottom: 1px solid #dedede; display: flex; font-size: 13px; line-height: 29px; flex: none; color: #444; }
.g-date span { text-align: center; }
.g-date span:first-child { width: 251px; border-right: 1px solid #dedede; padding-left: 12px; font-size: 12px; }
.g-date span:last-child { margin-left: 980px; width: 140px; }
.g-hours { height: 32px; border-bottom: 1px solid #ddd; display: flex; flex: none; }
.g-vehicle { width: 251px; border-right: 1px solid #dedede; display: flex; align-items: center; padding: 0 13px 0 13px; font-size: 13px; color: #333; }
.g-vehicle span { margin: -2px auto 0 18px; }
.g-vehicle svg + svg { margin-left: 7px; }
.box { width: 16px; height: 16px; border: 2px solid #1b65b0; border-radius: 2px; flex: none; }
.ticks { display: flex; padding-left: 30px; font-size: 13px; line-height: 29px; color: #333; width: 1399px; border-right: 1px solid #555; overflow: hidden; flex: none; }
.ticks span { width: 60px; text-align: center; flex: none; white-space: nowrap; }
.mag { width: 14px; height: 14px; margin: 7px 0 0 9px; }
.g-body { height: 335px; display: flex; overflow: hidden; flex: none; }
.rows { width: 1687px; overflow: hidden; }
.row { height: 70px; display: flex; border-bottom: 1px solid #dedede; }
.veh { width: 251px; flex: none; border-right: 1px solid #dedede; display: flex; align-items: center; padding: 0 0 1px 12px; }
.veh p { margin: 0 0 0 19px; width: 179px; display: flex; flex-direction: column; line-height: 19px; font-size: 12px; color: #666; white-space: nowrap; }
.veh small { font-size: 12px; color: #8f9396; }
.veh strong { font-size: 14px; font-weight: 500; color: #333; letter-spacing: .2px; }
.truck { width: 20px; height: 16px; fill: #919798; }
.lane { width: 1436px; flex: none; display: flex; align-items: center; overflow: hidden; background: repeating-linear-gradient(90deg, #fff 0 60px, #f7f9fb 60px 120px); }
.stop { flex: none; height: 30px; border: 1px solid #919798; border-radius: 3px; background: #fff; color: #919798; display: flex; align-items: center; justify-content: center; font: 500 14px/18px Roboto; padding-bottom: 2px; }
.depot { height: 32px; border-radius: 2px; justify-content: space-around; font-size: 12px; font-weight: 700; padding: 0; }
.depot.roomy { padding: 0 3px; }
.depot span { margin-top: -2px; white-space: nowrap; }
.depot svg { width: 20px; height: 20px; fill: #919798; flex: none; margin-top: 1px; }
.link { flex: none; height: 4px; }
.link.solid { background: #919798; }
.link.dashed { border-top: 4px dashed #919798; }
.vscroll { width: 18px; background: #f1f1f1; display: flex; flex-direction: column; align-items: center; justify-content: space-between; padding-bottom: 7px; }
.vscroll i { width: 13px; height: 305px; background: #c1c1c1; }
.hscroll { height: 15px; background: #f1f1f1; display: flex; align-items: center; flex: none; padding-top: 2px; }
.hscroll i { height: 13px; width: 1157px; background: #c1c1c1; flex: none; }
.left { border: 3.500px solid transparent; border-left: 0; border-right: 4px solid #a3a3a3; margin: 0 7px 0 6px; }
.right { border: 3.500px solid transparent; border-right: 0; border-left: 4px solid #505050; margin-left: auto; margin-right: 5px; }
.hscroll span { width: 18px; height: 15px; background: #dcdcdc; margin: -2px 0 0 0; }

.foot { flex: 1; display: flex; align-items: flex-start; }
.stats-wrap { width: 1143px; padding-top: 6px; overflow: hidden; flex: none; }
.stats { display: grid; grid-template-columns: 44px 81px 111px 84px 132px 135px 165px 143px 128px 120px; padding-left: 15px; height: 34px; font-size: 12px; line-height: 17px; color: #666; white-space: nowrap; width: 1200px; }
.stats b { display: block; font-weight: 400; color: #3b8edb; }
.hscroll.small { height: 17px; padding: 0; }
.hscroll.small i { width: 1001px; }
.actions { display: flex; gap: 7.500px; padding: 12px 0 0 52px; }
.act { width: 120px; height: 38px; border-radius: 4px; box-shadow: 0 2px 2px rgba(0,0,0,.2); font: 500 14px/16px Roboto; letter-spacing: .4px; display: flex; align-items: center; justify-content: center; }
.act svg { width: 17px; height: 19px; fill: currentColor; }
.act span { text-align: center; }
.act.off { background: #e2e4e3; color: #a9acac; padding-right: 10px; }
.act.off svg { margin-right: 22px; }
.act.off + .act.off svg { margin-right: 10px; }
.act.off + .act.off { padding: 0 4px 0 0; }
.act.blue { background: #1b65b0; color: #fff; }
.act.blue span { flex: 1; }
.act.blue em { width: 42px; height: 38px; border-left: 1px solid #134d8a; display: flex; align-items: center; justify-content: center; padding-top: 2px; }
.act.yellow { background: #f8db5c; color: #333; padding-right: 4px; }
.act.yellow svg { margin-right: 12px; width: 19px; }

.highlight { position: absolute; left: 166px; top: 519px; width: 1663px; height: 147px; border: 4px solid #fe0000; border-radius: 1px; }
.feedback { position: absolute; right: 0; top: 416px; width: 37px; height: 109px; background: rgba(211,52,4,.97); border-radius: 3px 0 0 3px; display: flex; flex-direction: column; align-items: center; padding-top: 12px; }
.feedback span { writing-mode: vertical-rl; transform: rotate(180deg); color: #fff; font: 500 12px/16px Roboto; letter-spacing: 1px; height: 60px; margin-left: 1px; }
.feedback svg { width: 20px; height: 16px; margin-top: 7px; }
```
